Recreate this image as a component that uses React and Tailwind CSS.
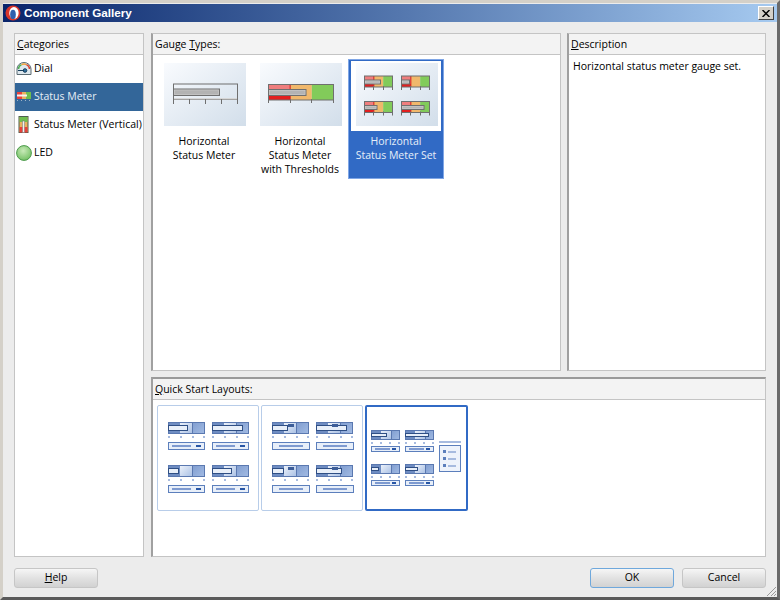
import React from "react";

const categories = [
  { name: "Dial", icon: <DialIcon /> },
  { name: "Status Meter", icon: <MeterIcon />, selected: true },
  { name: "Status Meter (Vertical)", icon: <VerticalIcon /> },
  { name: "LED", icon: <LedIcon /> },
];

function DialIcon() {
  return (
    <svg width="16" height="14" viewBox="0 0 16 14">
      <path d="M1 12.5V7a7 6.5 0 0 1 14 0v5.5z" fill="#dfe8ee" stroke="#5a6a72" />
      <path d="M2.5 7a5.5 5 0 0 1 3-4.4" fill="none" stroke="#4caf50" strokeWidth="1.5" />
      <path d="M5.5 2.6a5.5 5 0 0 1 5 0" fill="none" stroke="#f2a33a" strokeWidth="1.5" />
      <path d="M10.5 2.6a5.5 5 0 0 1 3 4.4" fill="none" stroke="#d9412f" strokeWidth="1.5" />
      <circle cx="9" cy="8.5" r="1.8" fill="#2f6f9f" stroke="#17405f" />
      <path d="M2 8.5h6" stroke="#17405f" />
    </svg>
  );
}

function MeterIcon() {
  return (
    <svg width="16" height="12" viewBox="0 0 16 12">
      <rect x="1" y="1" width="14" height="7" fill="#e9b25f" />
      <rect x="1" y="1" width="5" height="7" fill="#e8413a" />
      <rect x="10" y="1" width="5" height="7" fill="#6fbe4f" />
      <rect x="1" y="3.5" width="10" height="2" fill="#f4f4f4" />
      <path d="M1 9.5h1M5 9.5h1M9 9.5h1M13 9.5h1" stroke="#9db2c6" />
    </svg>
  );
}

function VerticalIcon() {
  return (
    <svg width="12" height="18" viewBox="0 0 12 18">
      <rect x="1" y="0.5" width="9" height="16" fill="#e9b25f" stroke="#4f5f4f" />
      <rect x="1.5" y="1" width="8" height="5" fill="#6fbe4f" />
      <rect x="1.5" y="11" width="8" height="5.5" fill="#e8413a" />
      <rect x="4.5" y="5" width="2" height="11.5" fill="#f1f1f1" stroke="#777" strokeWidth="0.5" />
    </svg>
  );
}

function LedIcon() {
  return (
    <svg width="16" height="16" viewBox="0 0 16 16">
      <defs>
        <radialGradient id="led" cx="45%" cy="35%" r="70%">
          <stop offset="0" stopColor="#c8eab8" />
          <stop offset="1" stopColor="#6fbe5f" />
        </radialGradient>
      </defs>
      <circle cx="8" cy="8" r="7.4" fill="url(#led)" stroke="#4c9a4c" />
    </svg>
  );
}

function Grey({ x, y, w, h, tick, bar, barH, barY, count = 4 }) {
  const ticks = [];
  for (let i = 0; i <= count; i++) ticks.push(Math.round(x + (w * i) / count - 0.5) + 0.5);
  return (
    <g>
      {ticks.map((t) => (
        <line key={t} x1={t} x2={t} y1={y + h - 1} y2={tick} stroke="#6f6f6f" />
      ))}
      <rect x={x} y={barY} width={bar} height={barH} fill="#b3b3b3" stroke="#6f6f6f" />
      <rect x={x + 1} y={barY + 1} width={bar - 2} height={barH - 2} fill="none" stroke="#d0d0d0" strokeWidth="0.5" />
    </g>
  );
}

function ColorMeter({ x, y, w, h, bar }) {
  const third = w / 3;
  const barH = Math.round(h * 0.38);
  const barY = y + Math.round((h - barH) / 2);
  return (
    <g>
      <rect x={x} y={y} width={third} height={h} fill="#ef7e7e" />
      <rect x={x} y={y + h * 0.72} width={third} height={h * 0.28} fill="#e21f1f" />
      <rect x={x + third} y={y} width={third} height={h} fill="#f0b86c" />
      <rect x={x + 2 * third} y={y} width={third} height={h} fill="#82cb5a" />
      <line x1={x + third} x2={x + third} y1={y} y2={y + h} stroke="#d41a1a" />
      <rect x={x} y={y} width={w} height={h} fill="none" stroke="#6f6f6f" />
      <Grey x={x} y={y} w={w} h={h} tick={y + h + 3} bar={bar} barH={barH} barY={barY} count={3} />
    </g>
  );
}

function ThumbOne() {
  return (
    <svg width="82" height="63" viewBox="0 0 82 63">
      <rect x="9.5" y="21" width="64" height="15.5" fill="none" stroke="#6f6f6f" />
      <rect x="10" y="35" width="63" height="1.5" fill="#d6d6d6" />
      <Grey x={9.5} y={21} w={64} h={16} tick={41} bar={46} barH={6.5} barY={26} />
    </svg>
  );
}

function ThumbTwo() {
  return (
    <svg width="82" height="63" viewBox="0 0 82 63">
      <ColorMeter x={8.5} y={21.5} w={65} h={15.5} bar={37.5} />
    </svg>
  );
}

function ThumbThree() {
  return (
    <svg width="82" height="63" viewBox="0 0 82 63">
      <ColorMeter x={8.5} y={13} w={28} h={11} bar={16} />
      <ColorMeter x={45.5} y={13} w={28} h={11} bar={8} />
      <ColorMeter x={8.5} y={38.5} w={28} h={11} bar={12.5} />
      <ColorMeter x={45.5} y={38.5} w={28} h={11} bar={22.5} />
    </svg>
  );
}

const gaugeTypes = [
  { lines: ["Horizontal", "Status Meter"], thumb: <ThumbOne /> },
  { lines: ["Horizontal", "Status Meter", "with Thresholds"], thumb: <ThumbTwo /> },
  { lines: ["Horizontal", "Status Meter Set"], thumb: <ThumbThree />, selected: true },
];

function GaugeCell({ item }) {
  if (item.selected) {
    return (
      <div className="w-[96px] h-[120px] bg-[#316ac5] border border-[#7fa6e6] flex flex-col">
        <div className="mx-[2px] mt-px h-[70px] bg-white flex justify-center pt-[2px] pl-[2px]">
          <div className="w-[82px] h-[63px] bg-linear-to-br from-[#f9fbfe] to-[#d2deea]">{item.thumb}</div>
        </div>
        <div className="text-center text-[#e6eef8] leading-[14px] pt-[3px] whitespace-nowrap">
          {item.lines.map((l) => (
            <div key={l}>{l}</div>
          ))}
        </div>
      </div>
    );
  }
  return (
    <div className="w-[96px] h-[120px] flex flex-col items-center pt-[4px]">
      <div className="w-[82px] h-[63px] ml-[2px] bg-linear-to-br from-[#f9fbfe] to-[#d2deea]">{item.thumb}</div>
      <div className="text-center leading-[14px] pt-[8px] whitespace-nowrap">
        {item.lines.map((l) => (
          <div key={l}>{l}</div>
        ))}
      </div>
    </div>
  );
}

function MiniMeter({ x, y, w, h, bar, marker, dotY }) {
  const third = Math.round(w / 3);
  const dots = [0, 0.33, 0.68, 1];
  return (
    <g>
      <rect x={x} y={y} width={third} height={h} fill="#6f8dc2" />
      <rect x={x + third} y={y} width={third} height={h} fill="url(#mid)" />
      <rect x={x + 2 * third} y={y} width={w - 2 * third} height={h} fill="url(#end)" />
      <rect x={x + 0.5} y={y + 0.5} width={w - 1} height={h - 1} fill="none" stroke="#5a78b0" />
      <line x1={x + 2 * third + 0.5} x2={x + 2 * third + 0.5} y1={y} y2={y + h} stroke="#5a78b0" />
      {bar > 0 && <rect x={x + 0.5} y={y + 3.5} width={bar} height={h - 7} fill="#e8eff9" stroke="#2f4f85" />}
      {marker != null && <rect x={x + marker} y={y + 2} width={6} height={3} fill="#3d5e99" />}
      {dots.map((d) => (
        <rect key={d} x={Math.round(x + (w - 2) * d)} y={dotY} width="2" height="2" fill="#a7bbdf" />
      ))}
    </g>
  );
}

function Legend({ x, y, w, h, swatch }) {
  const swatchW = w > 30 ? 5 : 4;
  return (
    <g>
      <rect x={x + 0.5} y={y + 0.5} width={w - 1} height={h - 1} fill="#e8eff9" stroke="#5c7fbc" />
      {swatch ? (
        <>
          <rect x={x + 4} y={y + h / 2 - 1} width={Math.round(w * 0.5)} height={2} fill="#7e9ad0" />
          <rect x={x + w - swatchW - 4} y={y + h / 2 - 1} width={swatchW} height={2} fill="#2856a6" />
        </>
      ) : (
        <rect x={x + 7} y={y + h / 2 - 1} width={w - 14} height={2} fill="#7e9ad0" />
      )}
    </g>
  );
}

function LayoutDefs() {
  return (
    <defs>
      <linearGradient id="mid" x1="0" y1="0" x2="1" y2="1">
        <stop offset="0" stopColor="#eef3fb" />
        <stop offset="1" stopColor="#a9c0e4" />
      </linearGradient>
      <linearGradient id="end" x1="0" y1="0" x2="1" y2="1">
        <stop offset="0" stopColor="#7f9ccf" />
        <stop offset="1" stopColor="#a3bce4" />
      </linearGradient>
    </defs>
  );
}

function LayoutOne() {
  return (
    <svg width="100" height="104" viewBox="1 1 100 104">
      <LayoutDefs />
      <MiniMeter x={11} y={17} w={37} h={12} bar={19} dotY={31} />
      <MiniMeter x={55} y={17} w={37} h={12} bar={30} dotY={31} />
      <Legend x={11} y={37} w={37} h={8} swatch />
      <Legend x={55} y={37} w={37} h={8} swatch />
      <MiniMeter x={11} y={60} w={37} h={12} bar={10} dotY={74} />
      <MiniMeter x={55} y={60} w={37} h={12} bar={19} dotY={74} />
      <Legend x={11} y={80} w={37} h={8} swatch />
      <Legend x={55} y={80} w={37} h={8} swatch />
    </svg>
  );
}

function LayoutTwo() {
  return (
    <svg width="100" height="104" viewBox="1 1 100 104">
      <LayoutDefs />
      <MiniMeter x={11} y={17} w={37} h={12} bar={15} marker={16} dotY={31} />
      <MiniMeter x={55} y={17} w={37} h={12} bar={30} marker={16} dotY={31} />
      <Legend x={11} y={37} w={38} h={8} />
      <Legend x={55} y={37} w={38} h={8} />
      <MiniMeter x={11} y={60} w={37} h={12} bar={11} marker={16} dotY={74} />
      <MiniMeter x={55} y={60} w={37} h={12} bar={25} marker={16} dotY={74} />
      <Legend x={11} y={80} w={38} h={8} />
      <Legend x={55} y={80} w={38} h={8} />
    </svg>
  );
}

function LayoutThree() {
  return (
    <svg width="100" height="104" viewBox="1 1 100 104">
      <LayoutDefs />
      <MiniMeter x={6} y={25} w={29} h={10} bar={15} dotY={37} />
      <MiniMeter x={40} y={25} w={29} h={10} bar={23} dotY={37} />
      <Legend x={6} y={41} w={29} h={6} swatch />
      <Legend x={40} y={41} w={29} h={6} swatch />
      <MiniMeter x={6} y={59} w={29} h={10} bar={7} dotY={71} />
      <MiniMeter x={40} y={59} w={29} h={10} bar={12} dotY={71} />
      <Legend x={6} y={75} w={29} h={6} swatch />
      <Legend x={40} y={75} w={29} h={6} swatch />
      <rect x="74" y="36" width="22" height="2" fill="#a7bbdf" />
      <rect x="74.5" y="40.5" width="21" height="26" fill="#eef3fb" stroke="#5c7fbc" />
      {[45, 52, 59].map((y) => (
        <g key={y}>
          <rect x="78" y={y} width="3" height="3" fill="#5c7fbc" />
          <rect x="83" y={y + 1} width="8" height="2" fill="#a7bbdf" />
        </g>
      ))}
    </svg>
  );
}

function Header({ children }) {
  return (
    <div className="h-[21px] shrink-0 bg-[#f3f3f3] border-b border-[#c4c4c4] pl-[2px] pt-px flex items-center">
      {children}
    </div>
  );
}

function Button({ children, focused }) {
  return (
    <button
      className={
        "w-[84px] h-[20px] rounded-[3px] border text-black leading-none pb-px bg-linear-to-b from-[#f6f6f6] via-[#e2e2e2] to-[#d2d2d2] " +
        (focused ? "border-[#6fa8dc]" : "border-[#c6c6c6]")
      }
    >
      {children}
    </button>
  );
}

export default function App() {
  return (
    <div className="w-[780px] h-[600px] flex flex-col bg-[#ececec] border-[3px] border-[#d4d0c8] border-r-[#6a6a6a] border-b-[#5a5a5a] text-[10.5px] text-black font-['Open_Sans',sans-serif]">
      {/* title bar */}
      <div className="h-[18px] mt-px shrink-0 flex items-center bg-linear-to-r from-[#0a246a] to-[#a6caf0] pl-[2px] pr-[2px]">
        <svg width="16" height="16" viewBox="0 0 17 17">
          <circle cx="8.5" cy="8.5" r="8" fill="#d8352a" />
          <ellipse cx="9.5" cy="8.5" rx="5" ry="6.5" fill="#ffffff" />
          <ellipse cx="8.5" cy="10" rx="3" ry="5" fill="#2f5fae" />
        </svg>
        <span className="ml-[3px] text-white font-bold text-[11.7px] flex-1 font-['Liberation_Sans',sans-serif]">
          Component Gallery
        </span>
        <div className="w-[16px] h-[14px] bg-[#d4d0c8] border border-t-white border-l-white border-r-[#404040] border-b-[#404040] flex items-center justify-center mr-px">
          <svg width="8" height="7" viewBox="0 0 8 7">
            <path d="M0.5 0 7.5 7M7.5 0 0.5 7" stroke="#000" strokeWidth="1.5" />
          </svg>
        </div>
      </div>

      {/* body */}
      <div className="flex-1 flex gap-[7px] pt-[11px] px-[11px] min-h-0">
        <div className="w-[130px] bg-white border border-[#c4c4c4] flex flex-col">
          <Header>
            <span>
              <span className="underline">C</span>ategories
            </span>
          </Header>
          {categories.map((c) => (
            <div
              key={c.name}
              className={
                "h-[28px] flex items-center whitespace-nowrap " +
                (c.selected ? "bg-[#336699] text-[#e6eef6]" : "")
              }
            >
              <span className="w-[18px] flex justify-center shrink-0">{c.icon}</span>
              <span className="ml-px">{c.name}</span>
            </div>
          ))}
        </div>

        <div className="flex-1 flex flex-col min-w-0">
          <div className="h-[338px] shrink-0 flex gap-[6px]">
            <div className="w-[410px] bg-white border border-[#c4c4c4] border-l-2 border-l-[#a0a0a0] flex flex-col">
              <Header>
                <span>
                  Gauge <span className="underline">T</span>ypes:
                </span>
              </Header>
              <div className="flex pl-[3px] pt-[4px]">
                {gaugeTypes.map((g) => (
                  <GaugeCell key={g.lines.join()} item={g} />
                ))}
              </div>
            </div>
            <div className="flex-1 bg-white border border-[#c4c4c4] border-l-2 border-l-[#a0a0a0] flex flex-col">
              <Header>
                <span>
                  <span className="underline">D</span>escription
                </span>
              </Header>
              <div className="pl-[4px] pt-[4px]">Horizontal status meter gauge set.</div>
            </div>
          </div>

          <div className="h-[6px] shrink-0" />

          <div className="flex-1 bg-white border border-[#c4c4c4] border-l-2 border-l-[#a0a0a0] border-t-2 border-t-[#9a9a9a] flex flex-col min-h-0">
            <Header>
              <span>
                <span className="underline">Q</span>uick Start Layouts:
              </span>
            </Header>
            <div className="flex gap-[2px] pl-[4px] pt-[5px]">
              <div className="w-[102px] h-[106px] border border-[#b8cde9] rounded-[2px]">
                <LayoutOne />
              </div>
              <div className="w-[102px] h-[106px] border border-[#b8cde9] rounded-[2px]">
                <LayoutTwo />
              </div>
              <div className="w-[103px] h-[106px] border-2 border-[#316ac5] rounded-[2px] overflow-hidden">
                <div className="-m-px">
                  <LayoutThree />
                </div>
              </div>
            </div>
          </div>
        </div>
      </div>

      {/* footer */}
      <div className="h-[40px] shrink-0 flex items-start justify-between px-[11px] pt-[11px] relative">
        <Button>
          <span className="underline">H</span>elp
        </Button>
        <div className="flex gap-[8px]">
          <Button focused>OK</Button>
          <Button>Cancel</Button>
        </div>
        <svg className="absolute right-0 bottom-0" width="12" height="12" viewBox="0 0 12 12">
          <path d="M11 2 2 11M11 6 6 11M11 9 9 11" stroke="#9a9a9a" />
        </svg>
      </div>
    </div>
  );
}
